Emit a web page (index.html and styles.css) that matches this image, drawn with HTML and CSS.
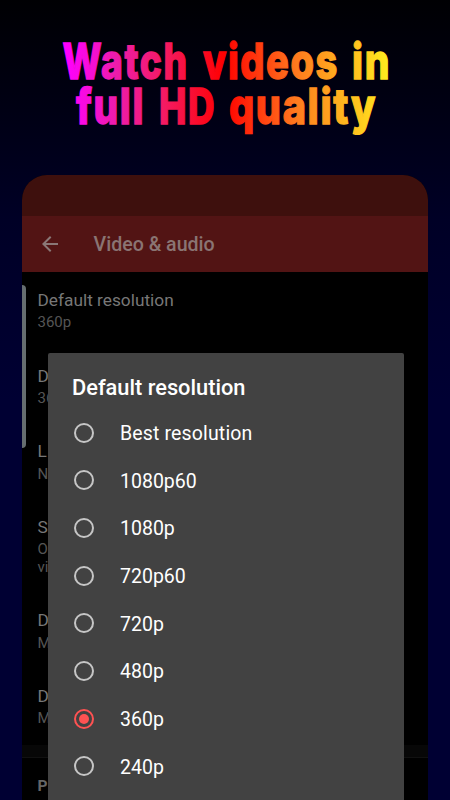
FILE: index.html
```html
<!DOCTYPE html>
<html lang="en">
<head>
<meta charset="utf-8">
<title>Video &amp; audio</title>
<link rel="stylesheet" href="styles.css">
</head>
<body>
<main class="page">
  <svg class="headline" width="450" height="175" viewBox="0 0 450 175">
    <defs>
      <linearGradient id="rainbow" gradientUnits="userSpaceOnUse" x1="66" y1="0" x2="395" y2="0">
        <stop offset="0" stop-color="#ff00ff"/>
        <stop offset=".15" stop-color="#ed1cac"/>
        <stop offset=".3" stop-color="#f41a62"/>
        <stop offset=".48" stop-color="#ff0000"/>
        <stop offset=".7" stop-color="#ff7a1e"/>
        <stop offset="1" stop-color="#fff51e"/>
      </linearGradient>
    </defs>
    <g class="headline-text" fill="url(#rainbow)" stroke="url(#rainbow)">
      <text x="62.5" y="78.5" textLength="126" lengthAdjust="spacingAndGlyphs">Watch</text>
      <text x="203" y="78.5" textLength="136" lengthAdjust="spacingAndGlyphs">videos</text>
      <text x="352" y="78.5" textLength="39" lengthAdjust="spacingAndGlyphs">in</text>
      <text x="76" y="123.5" textLength="69" lengthAdjust="spacingAndGlyphs">full</text>
      <text x="159" y="123.5" textLength="57" lengthAdjust="spacingAndGlyphs">HD</text>
      <text x="229" y="123.5" textLength="148" lengthAdjust="spacingAndGlyphs">quality</text>
    </g>
  </svg>
  <section class="phone">
    <div class="status"></div>
    <header class="toolbar">
      <svg class="back" width="24" height="24" viewBox="0 0 24 24"><path d="M20 11H7.83l5.59-5.59L12 4l-8 8 8 8 1.41-1.41L7.83 13H20z"/></svg>
      <h1>Video &amp; audio</h1>
    </header>
    <div class="list">
      <div class="item"><div class="name">Default resolution</div><div class="sub">360p</div></div>
      <div class="item"><div class="name">D</div><div class="sub">36</div></div>
      <div class="item"><div class="name">L</div><div class="sub">N</div></div>
      <div class="item tall"><div class="name">S</div><div class="sub">O<br>vi</div></div>
      <div class="item"><div class="name">D</div><div class="sub">M</div></div>
      <div class="item last"><div class="name">D</div><div class="sub">M</div></div>
      <div class="divider"></div>
      <div class="category">P</div>
    </div>
    <div class="scroll"></div>
    <div class="dialog">
      <h2>Default resolution</h2>
      <div class="option"><span class="radio"></span><span class="label wide">Best resolution</span></div>
      <div class="option"><span class="radio"></span><span class="label">1080p60</span></div>
      <div class="option"><span class="radio"></span><span class="label">1080p</span></div>
      <div class="option"><span class="radio"></span><span class="label">720p60</span></div>
      <div class="option"><span class="radio"></span><span class="label">720p</span></div>
      <div class="option"><span class="radio"></span><span class="label">480p</span></div>
      <div class="option"><span class="radio checked"></span><span class="label">360p</span></div>
      <div class="option"><span class="radio"></span><span class="label">240p</span></div>
    </div>
  </section>
</main>
</body>
</html>
```

FILE: styles.css
```css
* { box-sizing: border-box; }
body { margin: 0; font-family: Roboto, "Liberation Sans", sans-serif; }
.page {
  width: 450px;
  height: 800px;
  overflow: hidden;
  background: linear-gradient(#000003 0, #000014 110px, #000026 220px, #000033 400px, #000033 100%);
}
.headline { display: block; }
.headline-text {
  font-family: Inter, "Liberation Sans", sans-serif;
  font-weight: 800;
  font-size: 49px;
  letter-spacing: 2px;
  stroke-width: 1.3px;
}
.phone {
  position: relative;
  width: 406px;
  height: 625px;
  margin: 0 auto;
  border-radius: 25px 25px 0 0;
  background: #000;
  overflow: hidden;
}
.status { height: 41px; background: #3e100d; }
.toolbar {
  display: flex;
  align-items: center;
  gap: 31.5px;
  height: 56px;
  padding-left: 16px;
  background: #521414;
}
.back { fill: #8a7776; }
.toolbar h1 {
  margin: 0;
  padding-top: 2px;
  color: #8a7473;
  font-size: 19.6px;
  font-weight: 500;
  line-height: 24px;
}
.list { padding: 17px 0 0 15.5px; }
.item { height: 75.7px; }
.item.tall { height: 93.4px; }
.item.last { height: 60px; }
.name { color: #777; font-size: 17.3px; line-height: 23px; }
.sub { color: #555; font-size: 15px; line-height: 18px; margin-top: 1.3px; }
.divider {
  height: 13px;
  margin-left: -15.5px;
  background: #070707;
  border-bottom: 1px solid #111;
}
.category { margin-top: 16px; color: #666; font-size: 15.5px; font-weight: 700; line-height: 24px; }
.scroll {
  position: absolute;
  left: 0;
  top: 110px;
  width: 4px;
  height: 163px;
  border-radius: 0 4px 4px 0;
  background: #666e70;
}
.dialog {
  position: absolute;
  left: 26px;
  top: 178px;
  width: 356px;
  height: 460px;
  padding-top: 20px;
  border-radius: 2px;
  background: #424242;
  color: #fff;
}
.dialog h2 {
  margin: 0 0 8px 24px;
  padding-top: 1px;
  height: 28px;
  font-size: 21.8px;
  font-weight: 500;
  line-height: 28px;
}
.option {
  display: flex;
  align-items: center;
  gap: 26px;
  height: 47.65px;
  padding-left: 26px;
  font-size: 19.5px;
}
.label { padding-top: 1.5px; }
.label.wide { letter-spacing: .15px; }
.radio {
  display: grid;
  place-items: center;
  width: 20px;
  height: 20px;
  border: 2px solid #c6c6c6;
  border-radius: 50%;
}
.radio.checked { border-color: #ff5252; }
.radio.checked::after {
  content: "";
  width: 10px;
  height: 10px;
  border-radius: 50%;
  background: #ff5252;
}
```
